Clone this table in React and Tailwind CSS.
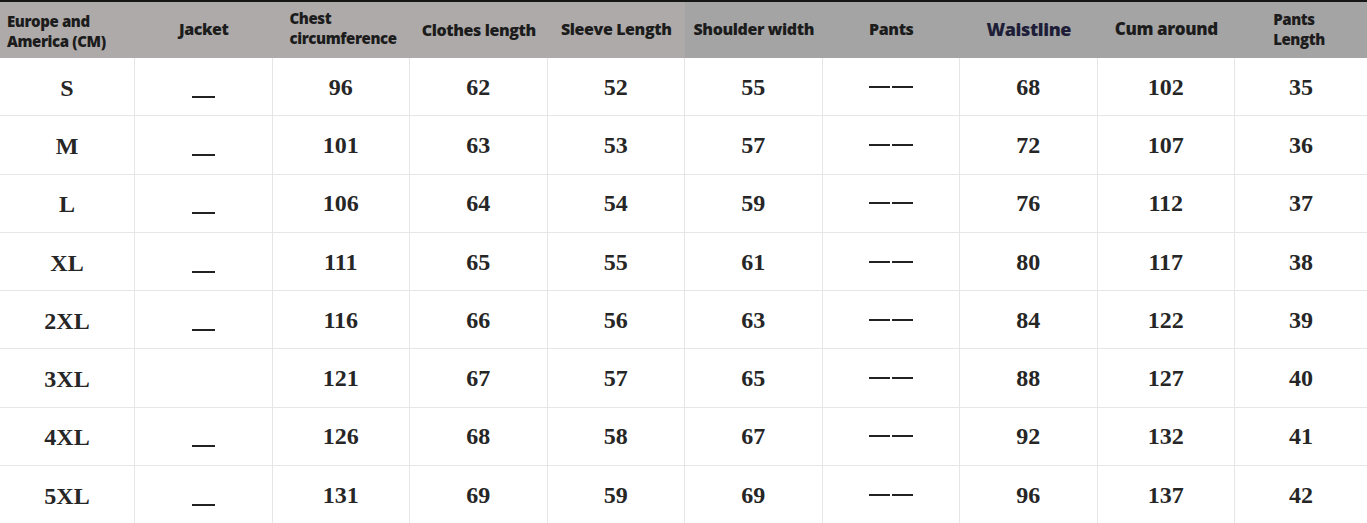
import React from "react";

const rows = [
  ["S", true, 96, 62, 52, 55, 68, 102, 35],
  ["M", true, 101, 63, 53, 57, 72, 107, 36],
  ["L", true, 106, 64, 54, 59, 76, 112, 37],
  ["XL", true, 111, 65, 55, 61, 80, 117, 38],
  ["2XL", true, 116, 66, 56, 63, 84, 122, 39],
  ["3XL", false, 121, 67, 57, 65, 88, 127, 40],
  ["4XL", true, 126, 68, 58, 67, 92, 132, 41],
  ["5XL", true, 131, 69, 59, 69, 96, 137, 42],
];

const headFont = { fontFamily: '"Open Sans", "DejaVu Sans", sans-serif' };
const bodyFont = { fontFamily: '"Liberation Serif", "DejaVu Serif", serif' };

const Cell = ({ children, last }) => (
  <div className={`flex items-center justify-center h-[58.3px] border-b border-[#e6e6e6] ${last ? "" : "border-r"}`}>
    {children}
  </div>
);

export default function App() {
  return (
    <div className="w-[1367px] h-[523px] bg-white overflow-hidden">
      <div className="h-[2px] bg-[#161616]"></div>

      {/* header */}
      <div
        className="grid grid-cols-[135px_repeat(8,137.5px)_1fr] h-[56px] text-[16px] font-extrabold text-[#1c1c1c] leading-[20px] tracking-[-0.4px]"
        style={headFont}
      >
        <div className="bg-[#adaaa9] flex items-center pl-[7px] pt-[2px] text-[15px]">
          <div>
            <div>Europe and</div>
            <div>America (CM)</div>
          </div>
        </div>
        <div className="bg-[#adaaa9] flex items-center justify-center pb-[2px]">Jacket</div>
        <div className="bg-[#adaaa9] flex items-center pl-[17px] pb-[4px] text-[15px]">
          <div>
            <div>Chest</div>
            <div>circumference</div>
          </div>
        </div>
        <div className="bg-[#adaaa9] flex items-center justify-center">Clothes length</div>
        <div className="bg-[#adaaa9] flex items-center justify-center pb-[2px]">Sleeve Length</div>
        <div className="bg-[#a4a4a4] flex items-center justify-center pb-[2px]">Shoulder width</div>
        <div className="bg-[#a4a4a4] flex items-center justify-center pb-[2px]">Pants</div>
        <div className="bg-[#a4a4a4] flex items-center justify-center pb-[3px] text-[18px] text-[#1e1e38]">Waistline</div>
        <div className="bg-[#a4a4a4] flex items-center justify-center pb-[2px] text-[17px]">Cum around</div>
        <div className="bg-[#a4a4a4] flex items-center justify-center pr-[4px] pb-[2px] text-[15px]">
          <div>
            <div>Pants</div>
            <div>Length</div>
          </div>
        </div>
      </div>

      {/* body */}
      <div
        className="grid grid-cols-[135px_repeat(8,137.5px)_1fr] text-[24px] font-bold text-[#262626]"
        style={bodyFont}
      >
        {rows.map(([size, jacket, chest, clothes, sleeve, shoulder, waist, cum, pants]) => (
          <React.Fragment key={size}>
            <Cell>
              <span className="pt-[2px]">{size}</span>
            </Cell>
            <Cell>
              {jacket && <div className="w-[23px] h-[2px] bg-[#222] mt-[20px]"></div>}
            </Cell>
            <Cell>{chest}</Cell>
            <Cell>{clothes}</Cell>
            <Cell>{sleeve}</Cell>
            <Cell>{shoulder}</Cell>
            <Cell>
              <div className="flex gap-[2px]">
                <div className="w-[21px] h-[2px] bg-[#222]"></div>
                <div className="w-[21px] h-[2px] bg-[#222]"></div>
              </div>
            </Cell>
            <Cell>{waist}</Cell>
            <Cell>{cum}</Cell>
            <Cell last>{pants}</Cell>
          </React.Fragment>
        ))}
      </div>
    </div>
  );
}
